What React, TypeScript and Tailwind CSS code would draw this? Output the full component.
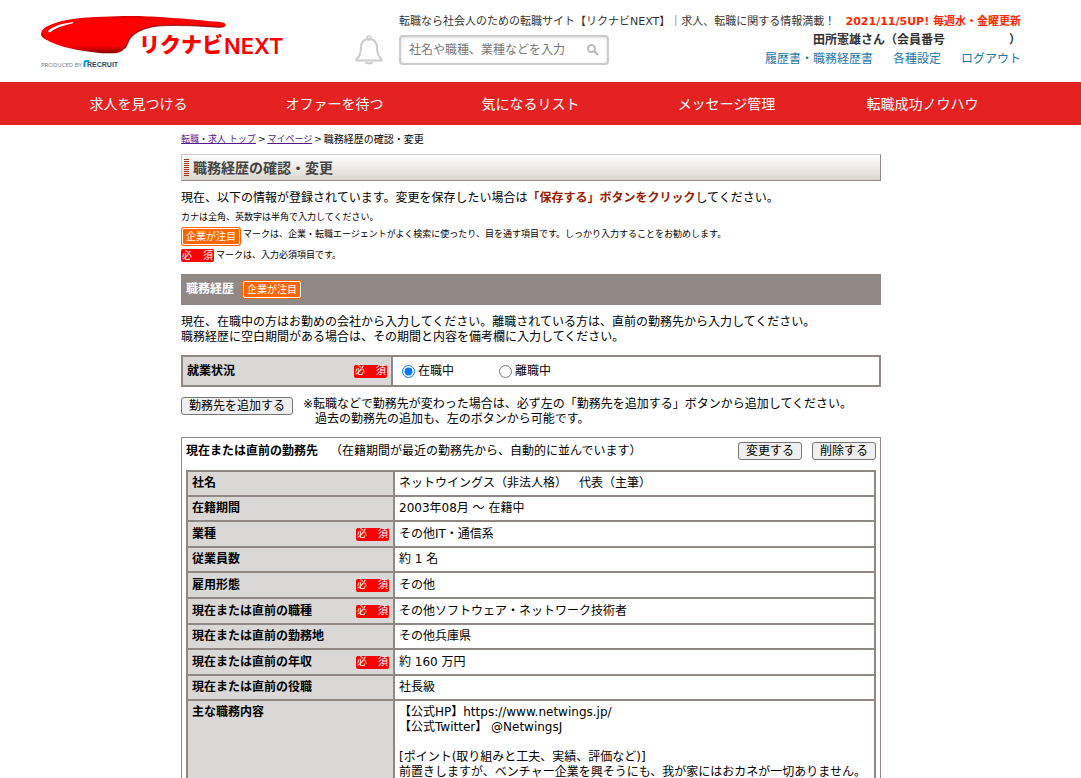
import React from "react";

const NAV = ["求人を見つける", "オファーを待つ", "気になるリスト", "メッセージ管理", "転職成功ノウハウ"];

type Row = { label: string; value: string; required?: boolean };

const ROWS: Row[] = [
  { label: "社名", value: "ネットウイングス（非法人格）　代表（主筆）" },
  { label: "在籍期間", value: "2003年08月 ～ 在籍中" },
  { label: "業種", value: "その他IT・通信系", required: true },
  { label: "従業員数", value: "約 1 名" },
  { label: "雇用形態", value: "その他", required: true },
  { label: "現在または直前の職種", value: "その他ソフトウェア・ネットワーク技術者", required: true },
  { label: "現在または直前の勤務地", value: "その他兵庫県" },
  { label: "現在または直前の年収", value: "約 160 万円", required: true },
  { label: "現在または直前の役職", value: "社長級" },
];

function RequiredBadge() {
  return (
    <span className="inline-flex h-[13px] w-[33px] shrink-0 items-center justify-between rounded-[2px] bg-[#ff0000] px-px text-[10px] leading-3 font-normal text-white">
      <span>必</span>
      <span>須</span>
    </span>
  );
}

function NoticeBadge() {
  return (
    <span className="inline-flex h-[19px] w-[60px] shrink-0 rounded-[3px] bg-[#ff6600] p-px">
      <span className="flex flex-1 items-center justify-center rounded-[2px] border border-white text-[10px] leading-3 font-normal text-white">
        企業が注目
      </span>
    </span>
  );
}

function Logo() {
  return (
    <svg width="250" height="60" viewBox="0 0 250 60" role="img" aria-label="リクナビNEXT">
      <defs>
        <linearGradient id="body" x1="0" y1="0" x2="0" y2="1">
          <stop offset="0" stopColor="#d80000" />
          <stop offset="0.1" stopColor="#ff0000" />
          <stop offset="0.8" stopColor="#fb0000" />
          <stop offset="1" stopColor="#8a0000" />
        </linearGradient>
      </defs>
      <path
        d="M0 18.300 C0 14 3 11.500 9 9 C16 6 23 4.300 32 3 C42 1.500 51 1 62 .7 C72 .2 80 0 89 0 C102 0 112 .6 122 1.300 C135 2.200 146 3 156 4 C166 4.900 173 5.500 179 6 C183 6.400 184.500 7.500 184.500 9 C184.500 11 182 11.500 178 11.400 C174 11.200 171 10.900 169 10.700 C156 9.700 144 9.300 132 9.300 C124 9.300 117 9.700 112 10.700 C106 11.800 102.500 13 99 14.700 C94.500 17 91.500 19 89 22.300 C86.500 26 86.500 29 84 32.300 C81 36 77 37.300 72 37.300 C66 37.500 61 37.200 56 36.700 C46 35.800 37 34.300 29 32.300 C21 30.500 14 28.300 9 25.700 C3 22.800 0 21 0 18.300Z"
        fill="url(#body)"
      />
      <path
        d="M183 10.500 C180 11.400 174 11.200 169 10.700 C156 9.700 144 9.300 132 9.300 C124 9.300 117 9.700 112 10.700 C106 11.800 102.500 13 99 14.700 C94.500 17 91.500 19 89 22.300 C86.500 26 86.500 29 84 32.300"
        fill="none"
        stroke="#7a0000"
        strokeWidth="1.300"
        strokeOpacity=".75"
      />
      <path d="M7.500 14.500 C12 10.500 20 7.500 32 6 C33 6.800 31 7.800 28 8.300 C19 10.500 14 12.800 11 15 C8.500 17.200 6.500 16.500 7.500 14.500Z" fill="#fff" />
      <g fill="#ff0000">
        <text x="98" y="36" fontSize="21" fontWeight="900" fontFamily="'Noto Sans CJK JP', sans-serif">
          リクナビ
        </text>
        <text x="183" y="38" fontSize="22" fontWeight="600" fontFamily="Inter, sans-serif">
          NEXT
        </text>
      </g>
      <text x="0" y="51" fontSize="6" fill="#777" fontFamily="'Open Sans', sans-serif">
        PRODUCED BY
      </text>
      <path d="M43.500 51 V47 Q43.500 45 45.500 45 H48" fill="none" stroke="#00a0dc" strokeWidth="2" />
      <text x="46" y="51" fontSize="7" fontWeight="700" fill="#2b5263" fontFamily="'Liberation Sans', sans-serif">
        RECRUIT
      </text>
    </svg>
  );
}

function Bell() {
  return (
    <svg width="28" height="30" viewBox="0 0 28 30" fill="none" stroke="#cccccc" strokeWidth="2" strokeLinejoin="round" aria-hidden="true">
      <circle cx="14" cy="3" r="2" strokeWidth="1.500" />
      <path d="M14 4 C8.500 4 6 8 6 12 C6 18.500 5 21.500 1.500 24 V25.500 H26.500 V24 C23 21.500 22 18.500 22 12 C22 8 19.500 4 14 4Z" />
      <path d="M10.500 27 C11.500 29 16.500 29 17.500 27" />
    </svg>
  );
}

const BUTTON =
  "flex h-[18px] items-center justify-center rounded-[3px] border border-[#767676] bg-[#efefef] text-[12px] leading-4 text-black";

export default function App() {
  return (
    <div className="h-screen overflow-hidden bg-white font-['DejaVu_Sans','Noto_Sans_CJK_JP',sans-serif] text-[12px] leading-[15px] text-black [text-spacing-trim:space-all]">
      <header>
        <div className="pr-[19px]">
          <div className="mx-auto flex h-[82px] max-w-[980px] items-start">
            <a href="#" className="mt-4 shrink-0">
              <Logo />
            </a>
            <a href="#" aria-label="お知らせ" className="mt-[35px] ml-16 shrink-0">
              <Bell />
            </a>
            <div className="mt-3.5 ml-4 flex min-w-0 flex-1 flex-col text-[#333]">
              <div className="flex justify-between text-[11px] whitespace-nowrap">
                <p>転職なら社会人のための転職サイト【リクナビNEXT】｜求人、転職に関する情報満載！</p>
                <p className="font-bold text-[#ff2800]">2021/11/5UP! 毎週水・金曜更新</p>
              </div>
              <div className="flex items-start justify-between pt-1">
                <form className="mt-0.5 flex h-[30px] w-[210px] items-center rounded-[4px] border-2 border-[#ccc] px-2 shadow-[inset_0_1px_3px_#ddd]">
                  <input
                    type="text"
                    aria-label="求人検索"
                    placeholder="社名や職種、業種などを入力"
                    className="w-[178px] text-[12px] leading-4 outline-none placeholder:text-[#777]"
                  />
                  <button type="button" aria-label="検索">
                    <svg width="12" height="12" viewBox="0 0 12 12" fill="none" stroke="#bbb" strokeWidth="2" aria-hidden="true">
                      <circle cx="4.500" cy="4.500" r="3.500" />
                      <path d="M7.200 7.200 L11 11" strokeWidth="2.400" />
                    </svg>
                  </button>
                </form>
                <div className="flex flex-col items-end gap-1">
                  <p className="flex font-bold">
                    <span>田所憲雄さん（会員番号</span>
                    <span className="ml-16">）</span>
                  </p>
                  <div className="flex gap-5 text-[#2376a8]">
                    <a href="#">履歴書・職務経歴書</a>
                    <a href="#">各種設定</a>
                    <a href="#">ログアウト</a>
                  </div>
                </div>
              </div>
            </div>
          </div>
        </div>
        <nav className="bg-[#e52222] pr-5">
          <ul className="mx-auto flex h-[43px] max-w-[980px] items-center">
            {NAV.map((item) => (
              <li key={item} className="flex-1 text-center text-[14px] leading-5 text-white">
                <a href="#">{item}</a>
              </li>
            ))}
          </ul>
        </nav>
      </header>

      <div className="pr-[19px]">
        <main className="mx-auto max-w-[700px]">
          <div className="flex gap-0.5 pt-[7px] text-[10px]">
            <a href="#" className="text-[9px] text-[#551a8b] underline">転職・求人 トップ</a>
            <span className="text-[9px]">&gt;</span>
            <a href="#" className="text-[9px] text-[#551a8b] underline">マイページ</a>
            <span className="text-[9px]">&gt;</span>
            <span>職務経歴の確認・変更</span>
          </div>

          <div className="mt-[7px] flex h-[27px] items-center gap-1 border border-t-[#ccc] border-r-[#908884] border-b-[#908884] border-l-[#ccc] bg-linear-to-b from-white to-[#dcd6d0] pl-0.5">
            <span className="h-[17px] w-[5px] bg-[repeating-linear-gradient(to_bottom,#a03018_0,#a03018_1px,transparent_1px,transparent_2px)]" />
            <h1 className="text-[14px] leading-5 font-bold text-[#444]">職務経歴の確認・変更</h1>
          </div>

          <p className="mt-2.5">
            現在、以下の情報が登録されています。変更を保存したい場合は
            <strong className="text-[#9b1c00]">「保存する」ボタンをクリック</strong>してください。
          </p>
          <div className="mt-1 text-[9px]">
            <p>カナは全角、英数字は半角で入力してください。</p>
            <p className="mt-0.5 flex gap-0.5">
              <NoticeBadge />
              <span>マークは、企業・転職エージェントがよく検索に使ったり、目を通す項目です。しっかり入力することをお勧めします。</span>
            </p>
            <p className="mt-0.5 flex items-center gap-0.5">
              <RequiredBadge />
              <span>マークは、入力必須項目です。</span>
            </p>
          </div>

          <div className="mt-[11px] flex h-[31px] items-center gap-2 bg-[#908884] pl-[5px]">
            <h2 className="font-bold text-white">職務経歴</h2>
            <NoticeBadge />
          </div>

          <p className="mt-2.5">
            現在、在職中の方はお勤めの会社から入力してください。離職されている方は、直前の勤務先から入力してください。
            <br />
            職務経歴に空白期間がある場合は、その期間と内容を備考欄に入力してください。
          </p>

          <table className="mt-2.5 w-full table-fixed border-collapse border-2 border-[#908884]">
            <tbody>
              <tr className="h-[30px]">
                <th scope="row" className="w-[210px] border-2 border-[#908884] bg-[#d9d8d6] px-1 text-left font-bold">
                  <div className="flex items-center justify-between">
                    <span>就業状況</span>
                    <RequiredBadge />
                  </div>
                </th>
                <td className="border-2 border-[#908884] px-[9px]">
                  <div className="flex items-center">
                    <label className="flex w-[97px] items-center gap-[3px]">
                      <input type="radio" name="status" defaultChecked className="size-[13px] accent-[#0075ff]" />
                      在職中
                    </label>
                    <label className="flex items-center gap-[3px]">
                      <input type="radio" name="status" className="size-[13px]" />
                      離職中
                    </label>
                  </div>
                </td>
              </tr>
            </tbody>
          </table>

          <div className="mt-2.5 flex items-start gap-2.5">
            <button type="button" className={`${BUTTON} w-[112px]`}>勤務先を追加する</button>
            <p>
              ※転職などで勤務先が変わった場合は、必ず左の「勤務先を追加する」ボタンから追加してください。
              <br />
              <span className="pl-3">過去の勤務先の追加も、左のボタンから可能です。</span>
            </p>
          </div>

          <section className="mt-2.5 border border-[#908884] p-1">
            <div className="flex items-center">
              <h3 className="font-bold">現在または直前の勤務先</h3>
              <p className="ml-3">（在籍期間が最近の勤務先から、自動的に並んでいます）</p>
              <button type="button" className={`${BUTTON} ml-auto w-16`}>変更する</button>
              <button type="button" className={`${BUTTON} ml-2.5 w-16`}>削除する</button>
            </div>
            <table className="mt-2.5 w-full table-fixed border-collapse border-2 border-[#908884]">
              <tbody>
                {ROWS.map((row) => (
                  <tr key={row.label}>
                    <th scope="row" className="w-[207px] border-2 border-[#908884] bg-[#d9d8d6] px-1 py-1 text-left font-bold">
                      {row.required ? (
                        <div className="flex h-4 items-center justify-between">
                          <span>{row.label}</span>
                          <RequiredBadge />
                        </div>
                      ) : (
                        row.label
                      )}
                    </th>
                    <td className="border-2 border-[#908884] px-1 py-1">{row.value}</td>
                  </tr>
                ))}
                <tr>
                  <th scope="row" className="border-2 border-[#908884] bg-[#d9d8d6] px-1 py-1 text-left align-top font-bold">
                    主な職務内容
                  </th>
                  <td className="border-2 border-[#908884] px-1 pt-1 pb-12 align-top">
                    【公式HP】https://www.netwings.jp/
                    <br />
                    【公式Twitter】 @NetwingsJ
                    <br />
                    <br />
                    [ポイント(取り組みと工夫、実績、評価など)]
                    <br />
                    前置きしますが、ベンチャー企業を興そうにも、我が家にはおカネが一切ありません。
                  </td>
                </tr>
              </tbody>
            </table>
          </section>
        </main>
      </div>
    </div>
  );
}
